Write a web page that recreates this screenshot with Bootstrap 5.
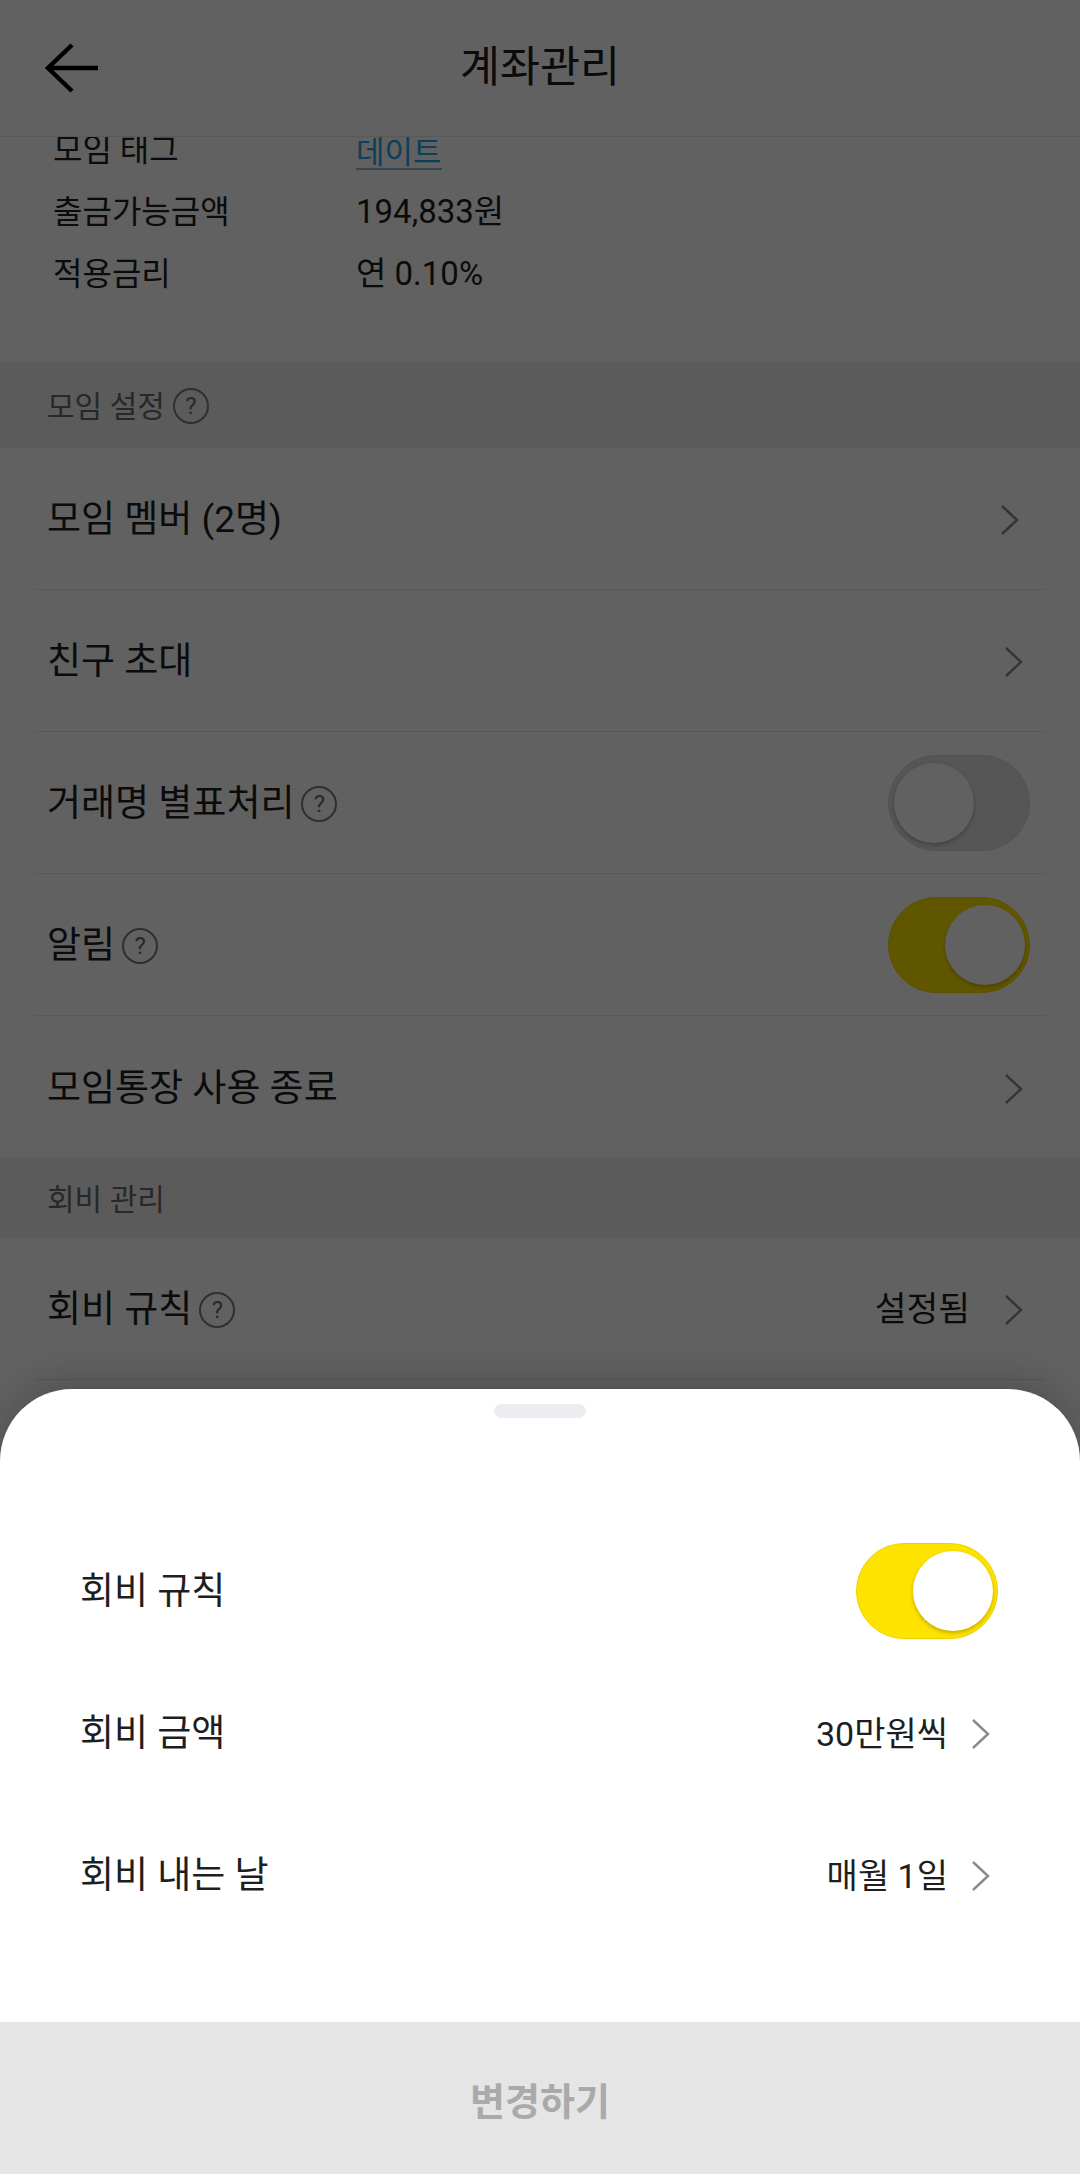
<!DOCTYPE html>
<html lang="ko">
<head>
  <meta charset="UTF-8">
  <title>계좌관리</title>
  <link href="https://cdn.jsdelivr.net/npm/bootstrap@5.3.3/dist/css/bootstrap.min.css" rel="stylesheet">
  <style>
    html, body { height: 2174px; overflow: hidden; }
    body { font-family: Roboto, "Noto Sans CJK KR", sans-serif; color: #1e1e1e; background: #fff; position: relative; }

    .app-header { height: 137px; background: #fff; border-bottom: 1px solid #ebebeb; position: relative; z-index: 1; padding-left: 45px; }
    .app-title { font-size: 43.5px; font-weight: 400; margin: 0; position: absolute; left: 0; right: 0; text-align: center; }

    .info-list { margin-top: -18px; padding: 0 0 57px 53px; }
    .info-row { height: 62px; font-size: 32px; }
    .info-label { width: 303px; }
    .info-value { font-size: 33px; }
    .tag-link { font-size: 31px; color: #26a5e8; text-decoration: none; border-bottom: 2px solid #8db4cf; line-height: 1; margin-top: 6px; }

    .section-head { background: #f0f0f0; padding-left: 47px; font-size: 30px; color: #6a6a6a; gap: 8px; }
    .section-one { height: 86px; padding-top: 2px; }
    .section-two { height: 80px; padding-top: 2px; }

    .set-list { margin: 0 35px; }
    .set-row { height: 142px; border-bottom: 1px solid #e8e8e8; padding: 3px 15px 0 12px; font-size: 37px; }
    .set-row:last-child { border-bottom: 0; }
    .row-text { gap: 7px; }
    .row-side { font-size: 34.5px; gap: 35px; margin-right: 7px; }
    .help-dot { width: 36px; height: 36px; border: 2px solid #7c7c7c; border-radius: 50%; font-size: 24px; color: #6a6a6a; line-height: 1; }

    .chev { width: 18px; height: 30px; flex: none; }
    .chev path { fill: none; stroke: #8a8a8a; stroke-width: 2.4; }
    .chev-far { margin-right: 11px; }
    .chev-near { margin-right: 7px; }

    .toggle-pill { width: 142px; height: 96px; border-radius: 48px; background: #e2e2e2; border: 1px solid #d8d8d8; position: relative; flex: none; margin-top: -3px; }
    .toggle-pill.is-on { background: #ffe300; border-color: #eed300; }
    .toggle-knob { width: 80px; height: 80px; border-radius: 50%; background: #fff; position: absolute; top: 7px; left: 5px; box-shadow: 0 2px 4px rgba(0, 0, 0, .25); }
    .is-on .toggle-knob { left: auto; right: 4px; }

    .dim-layer { position: absolute; inset: 0; background: rgba(0, 0, 0, .62); z-index: 2; }

    .bottom-sheet { position: absolute; left: 0; right: 0; top: 1389px; bottom: 0; z-index: 3; background: #fff; border-radius: 72px 72px 0 0; box-shadow: 0 -10px 36px rgba(0, 0, 0, .16); }
    .sheet-grip { width: 92px; height: 14px; border-radius: 7px; background: #ebedf0; margin: 15px auto 0; }
    .sheet-body { padding: 102px 82px 0 80px; flex: 1; }
    .sheet-row { height: 142px; font-size: 37px; padding-top: 2px; }
    .sheet-row .toggle-pill { margin-top: -2px; }
    .sheet-side { font-size: 34px; gap: 24px; margin-right: 8px; }
    .change-btn { height: 152px; width: 100%; border: 0; border-radius: 0; background: #e5e5e5; color: #aaa; font-size: 38px; font-weight: 700; padding-top: 15px; }
    .change-btn:disabled { background: #e5e5e5; color: #aaa; opacity: 1; }
  </style>
</head>
<body>
  <header class="app-header d-flex align-items-center">
    <h1 class="app-title">계좌관리</h1>
    <svg width="54" height="50" viewBox="0 0 54 50"><path d="M27 2 3 25l24 23M3 25h50" fill="none" stroke="#000" stroke-width="4.4"/></svg>
  </header>

  <div class="info-list">
    <div class="info-row d-flex align-items-center"><span class="info-label">모임 태그</span><a class="tag-link" href="#">데이트</a></div>
    <div class="info-row d-flex align-items-center"><span class="info-label">출금가능금액</span><span class="info-value">194,833원</span></div>
    <div class="info-row d-flex align-items-center"><span class="info-label">적용금리</span><span class="info-value">연 0.10%</span></div>
  </div>

  <div class="section-head section-one d-flex align-items-center"><span>모임 설정</span><span class="help-dot d-flex align-items-center justify-content-center">?</span></div>
  <div class="set-list">
    <div class="set-row d-flex align-items-center justify-content-between">
      <span>모임 멤버 (2명)</span>
      <svg class="chev chev-far" viewBox="0 0 18 30"><path d="M1 1l15 14L1 29"/></svg>
    </div>
    <div class="set-row d-flex align-items-center justify-content-between">
      <span>친구 초대</span>
      <svg class="chev chev-near" viewBox="0 0 18 30"><path d="M1 1l15 14L1 29"/></svg>
    </div>
    <div class="set-row d-flex align-items-center justify-content-between">
      <span class="row-text d-flex align-items-center">거래명 별표처리<span class="help-dot d-flex align-items-center justify-content-center">?</span></span>
      <span class="toggle-pill"><span class="toggle-knob"></span></span>
    </div>
    <div class="set-row d-flex align-items-center justify-content-between">
      <span class="row-text d-flex align-items-center">알림<span class="help-dot d-flex align-items-center justify-content-center">?</span></span>
      <span class="toggle-pill is-on"><span class="toggle-knob"></span></span>
    </div>
    <div class="set-row d-flex align-items-center justify-content-between">
      <span>모임통장 사용 종료</span>
      <svg class="chev chev-near" viewBox="0 0 18 30"><path d="M1 1l15 14L1 29"/></svg>
    </div>
  </div>

  <div class="section-head section-two d-flex align-items-center"><span>회비 관리</span></div>
  <div class="set-list">
    <div class="set-row d-flex align-items-center justify-content-between">
      <span class="row-text d-flex align-items-center">회비 규칙<span class="help-dot d-flex align-items-center justify-content-center">?</span></span>
      <span class="row-side d-flex align-items-center">설정됨<svg class="chev" viewBox="0 0 18 30"><path d="M1 1l15 14L1 29"/></svg></span>
    </div>
    <div class="set-row"></div>
  </div>

  <div class="dim-layer"></div>

  <section class="bottom-sheet d-flex flex-column">
    <div class="sheet-grip"></div>
    <div class="sheet-body">
      <div class="sheet-row d-flex align-items-center justify-content-between">
        <span>회비 규칙</span>
        <span class="toggle-pill is-on"><span class="toggle-knob"></span></span>
      </div>
      <div class="sheet-row d-flex align-items-center justify-content-between">
        <span>회비 금액</span>
        <span class="sheet-side d-flex align-items-center">30만원씩<svg class="chev" viewBox="0 0 18 30"><path d="M1 1l15 14L1 29"/></svg></span>
      </div>
      <div class="sheet-row d-flex align-items-center justify-content-between">
        <span>회비 내는 날</span>
        <span class="sheet-side d-flex align-items-center">매월 1일<svg class="chev" viewBox="0 0 18 30"><path d="M1 1l15 14L1 29"/></svg></span>
      </div>
    </div>
    <button type="button" class="btn change-btn" disabled>변경하기</button>
  </section>

  <script src="https://cdn.jsdelivr.net/npm/bootstrap@5.3.3/dist/js/bootstrap.bundle.min.js"></script>
</body>
</html>
